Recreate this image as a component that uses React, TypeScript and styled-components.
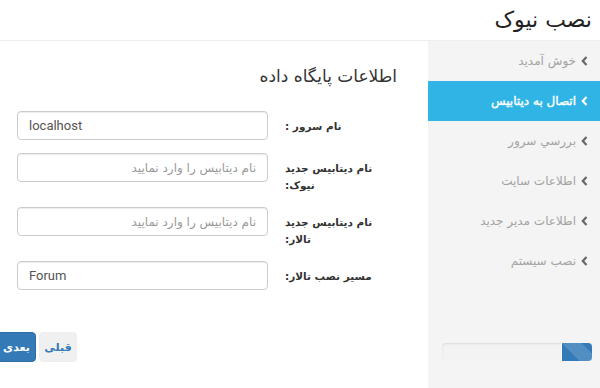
import styled, { createGlobalStyle } from "styled-components";

const GlobalStyle = createGlobalStyle`
  html, body {
    margin: 0;
    padding: 0;
    background: #fff;
    overflow: hidden;
  }
  body {
    font-family: "DejaVu Sans", "Noto Sans", sans-serif;
  }
`;

const steps = [
  "خوش آمدید",
  "اتصال به دیتابیس",
  "بررسي سرور",
  "اطلاعات سایت",
  "اطلاعات مدیر جدید",
  "نصب سیستم",
];

const fields = [
  { label: "نام سرور :", value: "localhost", ltr: true },
  { label: "نام دیتابیس جدید نیوک:", placeholder: "نام دیتابیس را وارد نمایید" },
  { label: "نام دیتابیس جدید تالار:", placeholder: "نام دیتابیس را وارد نمایید" },
  { label: "مسیر نصب تالار:", value: "Forum", ltr: true },
];

const Chevron = () => (
  <svg width="7" height="10" viewBox="0 0 7 10">
    <path d="M5.5 1 L1.8 5 L5.5 9" fill="none" stroke="currentColor" strokeWidth="2.2" />
  </svg>
);

const App = () => {
  return (
    <Page>
      <GlobalStyle />
      <Header>
        <Title>نصب نیوک</Title>
      </Header>
      <Body>
        <Sidebar>
          <StepList>
            {steps.map((s, i) => (
              <Step key={s} active={i === 1}>
                <ChevronBox active={i === 1}>
                  <Chevron />
                </ChevronBox>
                {s}
              </Step>
            ))}
          </StepList>
          <Progress>
            <ProgressBar style={{ width: `${(1 / 5) * 100}%` }} />
          </Progress>
        </Sidebar>
        <Main>
          <Heading>اطلاعات پایگاه داده</Heading>
          <Form>
            {fields.map((f) => (
              <Row key={f.label}>
                <Label>{f.label}</Label>
                <Input
                  ltr={f.ltr}
                  defaultValue={f.value}
                  placeholder={f.placeholder}
                  dir={f.ltr ? "ltr" : "rtl"}
                />
              </Row>
            ))}
          </Form>
          <Buttons>
            <PrevButton>قبلی</PrevButton>
            <NextButton>بعدی</NextButton>
          </Buttons>
        </Main>
      </Body>
    </Page>
  );
};

const Page = styled.div`
  direction: rtl;
  width: 600px;
  height: 388px;
  overflow: hidden;
  background: #fff;
`;

const Header = styled.div`
  height: 40px;
  border-bottom: 1px solid #eeeeee;
  display: flex;
  align-items: center;
  padding-right: 8px;
`;

const Title = styled.h1`
  margin: 0;
  font-size: 22px;
  font-weight: normal;
  color: #222;
  line-height: 1;
`;

const Body = styled.div`
  display: flex;
  height: 347px;
`;

const Sidebar = styled.div`
  width: 172px;
  flex-shrink: 0;
  background: #f4f4f4;
  display: flex;
  flex-direction: column;
`;

const StepList = styled.ul`
  list-style: none;
  margin: 0;
  padding: 0;
`;

const Step = styled.li<{ active?: boolean }>`
  height: 40px;
  display: flex;
  align-items: center;
  gap: 5px;
  padding-right: 12px;
  font-size: 12px;
  color: ${(p) => (p.active ? "#fff" : "#a3a3a3")};
  background: ${(p) => (p.active ? "#30b4e5" : "transparent")};
  -webkit-text-stroke: ${(p) => (p.active ? "0.4px #fff" : "0")};
`;

const ChevronBox = styled.span<{ active?: boolean }>`
  display: flex;
  color: ${(p) => (p.active ? "#fff" : "#666")};
`;

const Progress = styled.div`
  margin: 62px 8px 0 14px;
  height: 18px;
  background: #f3f3f3;
  border-radius: 4px;
  box-shadow: inset 0 1px 2px rgba(0, 0, 0, 0.1);
  overflow: hidden;
  display: flex;
`;

const ProgressBar = styled.div`
  height: 100%;
  background-color: #337ab7;
  background-image: linear-gradient(
    45deg,
    rgba(255, 255, 255, 0.15) 25%,
    transparent 25%,
    transparent 50%,
    rgba(255, 255, 255, 0.15) 50%,
    rgba(255, 255, 255, 0.15) 75%,
    transparent 75%,
    transparent
  );
  background-size: 40px 40px;
  border-left: 1px solid #fff;
`;

const Main = styled.div`
  flex: 1;
  display: flex;
  flex-direction: column;
  padding-right: 31px;
`;

const Heading = styled.h2`
  margin: 24px 0 0;
  font-size: 17px;
  font-weight: normal;
  color: #333;
  line-height: 22px;
`;

const Form = styled.div`
  margin-top: 24px;
  display: flex;
  flex-direction: column;
`;

const Row = styled.div`
  display: flex;
  align-items: flex-start;
  margin-bottom: 13px;
`;

const Label = styled.label`
  width: 96px;
  padding-top: 7px;
  margin-right: 16px;
  margin-left: 17px;
  font-size: 10.5px;
  font-weight: bold;
  line-height: 17px;
  color: #333;
  text-align: left;
`;

const Input = styled.input<{ ltr?: boolean }>`
  box-sizing: border-box;
  width: 251px;
  height: 29px;
  padding: 4px 11px;
  border: 1px solid #cccccc;
  border-radius: 4px;
  box-shadow: inset 0 1px 1px rgba(0, 0, 0, 0.075);
  font-family: ${(p) => (p.ltr ? '"Roboto", "Liberation Sans", sans-serif' : '"DejaVu Sans", sans-serif')};
  font-size: ${(p) => (p.ltr ? "13px" : "12px")};
  color: #555;
  text-align: ${(p) => (p.ltr ? "left" : "right")};
  outline: none;
  &::placeholder {
    color: #999;
  }
`;

const Buttons = styled.div`
  margin-top: 29px;
  display: flex;
  justify-content: flex-end;
  gap: 3px;
  margin-left: -3px;
`;

const BaseButton = styled.button`
  height: 30px;
  padding: 0 4px;
  border-radius: 4px;
  font-family: "DejaVu Sans", sans-serif;
  font-size: 11px;
  font-weight: bold;
  cursor: pointer;
`;

const PrevButton = styled(BaseButton)`
  background: #f0f0f0;
  border: 1px solid #eeeeee;
  color: #337ab7;
  width: 38px;
`;

const NextButton = styled(BaseButton)`
  background: #337ab7;
  border: 1px solid #2e6da4;
  color: #fff;
  width: 39px;
`;

export default App;
